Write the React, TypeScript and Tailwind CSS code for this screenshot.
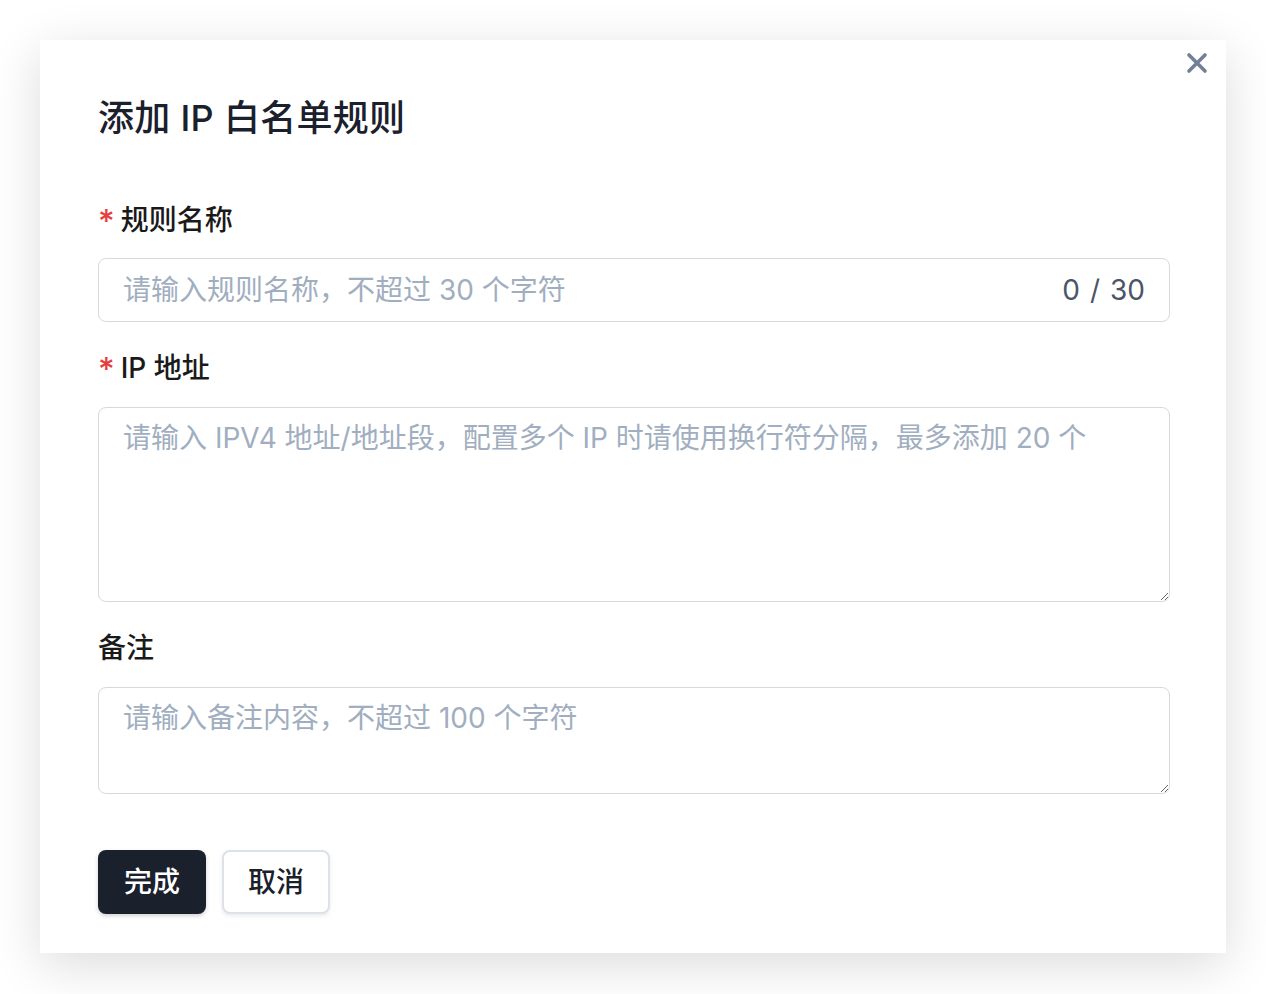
export default function App() {
  return (
    <div
      className="min-h-[994px] bg-white p-[40px] pb-[41px]"
      style={{ fontFamily: 'Inter, "Noto Sans CJK SC", sans-serif' }}
    >
      <div className="relative h-[913px] w-[1186px] bg-white pl-[58px] pr-[56px] pt-[51px] shadow-[0_12px_48px_rgba(0,0,0,0.14)]">
        <button className="absolute right-[18px] top-[12px] flex h-[22px] w-[22px] items-center justify-center text-[#718096]">
          <svg width="22" height="22" viewBox="0 0 22 22" fill="none">
            <path d="M3 3L19 19M19 3L3 19" stroke="currentColor" strokeWidth="3.6" strokeLinecap="round" />
          </svg>
        </button>

        <h2 className="text-[36px] font-medium leading-[54px] tracking-[0.3px] text-[#1a202c]">添加 IP 白名单规则</h2>

        <div className="mt-[55px] flex flex-col">
          <label className="flex h-[40px] items-center text-[28px] font-medium text-[#1a1a1a]">
            <span className="mr-[6px] mt-[4px] text-[32px] text-[#e53e3e]">*</span>规则名称
          </label>
          <div className="mt-[18px] flex h-[64px] items-center rounded-[8px] border border-[#d5d9e0] px-[24px]">
            <input
              className="h-full flex-1 bg-transparent text-[28px] text-[#1a202c] outline-none placeholder:text-[#a0aec0]"
              placeholder="请输入规则名称，不超过 30 个字符"
            />
            <span className="flex text-[28px] text-[#4a5568]">
              <span>0</span>
              <span className="mx-[10px]">/</span>
              <span>30</span>
            </span>
          </div>

          <label className="mt-[26px] flex h-[40px] items-center text-[28px] font-medium text-[#1a1a1a]">
            <span className="mr-[6px] mt-[4px] text-[32px] text-[#e53e3e]">*</span>IP 地址
          </label>
          <textarea
            className="mt-[19px] h-[195px] w-full rounded-[8px] border border-[#d5d9e0] px-[24px] py-[10px] text-[28px] leading-[40px] text-[#1a202c] outline-none placeholder:text-[#a0aec0]"
            placeholder="请输入 IPV4 地址/地址段，配置多个 IP 时请使用换行符分隔，最多添加 20 个"
          />

          <label className="mt-[26px] flex h-[40px] items-center text-[28px] font-medium text-[#1a1a1a]">备注</label>
          <textarea
            className="mt-[19px] h-[107px] w-full rounded-[8px] border border-[#d5d9e0] px-[24px] py-[10px] text-[28px] leading-[40px] text-[#1a202c] outline-none placeholder:text-[#a0aec0]"
            placeholder="请输入备注内容，不超过 100 个字符"
          />

          <div className="mt-[56px] flex gap-[16px]">
            <button className="h-[64px] w-[108px] rounded-[8px] bg-[#1a202c] text-[28px] font-medium text-white shadow-[0_2px_4px_rgba(0,0,0,0.18)]">
              完成
            </button>
            <button className="h-[64px] w-[108px] rounded-[8px] border-2 border-[#dde1e8] bg-white text-[28px] font-medium text-[#1a202c] shadow-[0_2px_4px_rgba(0,0,0,0.08)]">
              取消
            </button>
          </div>
        </div>
      </div>
    </div>
  );
}
